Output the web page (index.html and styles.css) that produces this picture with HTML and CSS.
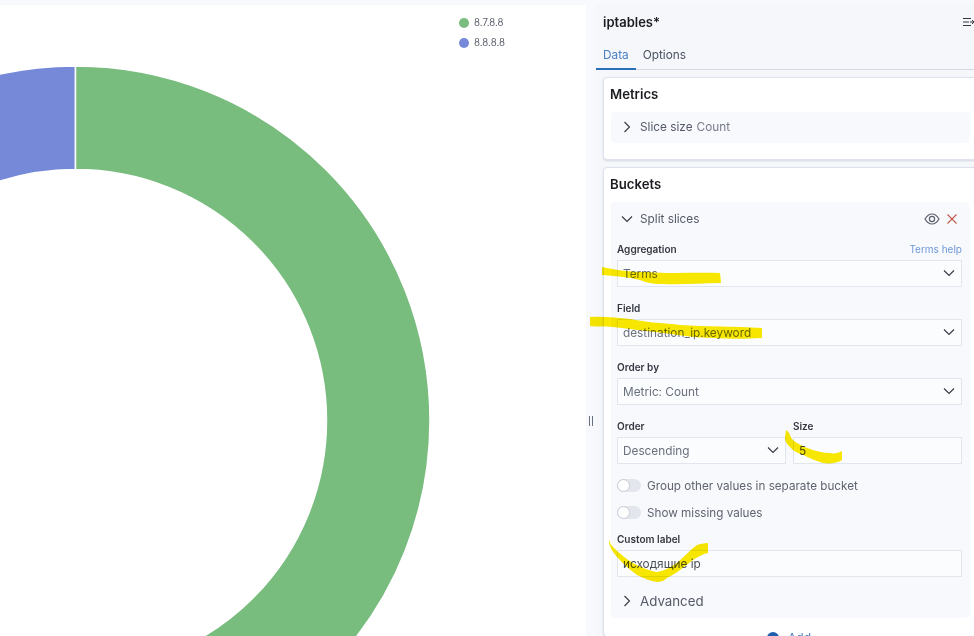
FILE: index.html
```html
<!DOCTYPE html>
<html lang="ru">
<head>
<meta charset="utf-8">
<title>iptables</title>
<link rel="stylesheet" href="styles.css">
</head>
<body>
<div class="page">
  <main class="chart">
    <svg class="donut" width="586" height="631" viewBox="0 5 586 631">
      <path class="slice slice-blue" d="M75.500 66A354.500 354.500 0 0 0-279 420.500L-175.500 420.500A251 251 0 0 1 75.500 169.500Z"/>
      <path class="slice slice-green" d="M75.500 66A354.500 354.500 0 0 1 75.500 775L75.500 671.500A251 251 0 0 0 75.500 169.500Z"/>
    </svg>
    <ul class="legend">
      <li class="legend-item"><span class="dot dot-green"></span>8.7.8.8</li>
      <li class="legend-item"><span class="dot dot-blue"></span>8.8.8.8</li>
    </ul>
  </main>
  <div class="resizer"><span class="grip"></span></div>
  <aside class="side">
    <header class="side-head">
      <h1 class="title">iptables*</h1>
      <svg class="collapse" width="11" height="12" viewBox="0 0 11 12"><path d="M0 2.500h8M0 6h6M0 9.500h8M7 6h4M9 4l2 2-2 2"/></svg>
    </header>
    <nav class="tabs">
      <span class="tab tab-active">Data</span>
      <span class="tab">Options</span>
    </nav>
    <section class="card card-metrics">
      <h2 class="card-title">Metrics</h2>
      <div class="accordion acc-closed">
        <svg class="chev" width="12" height="12" viewBox="0 0 12 12"><path d="M3.500 1l5 5-5 5"/></svg>
        <span class="acc-name">Slice size</span> <span class="acc-sub">Count</span>
      </div>
    </section>
    <section class="card card-buckets">
      <h2 class="card-title">Buckets</h2>
      <div class="accordion">
        <div class="acc-head">
          <svg class="chev" width="12" height="12" viewBox="0 0 12 12"><path d="M1 3.500l5 5 5-5"/></svg>
          <span class="acc-name">Split slices</span>
          <svg class="eye" width="16" height="16" viewBox="0 0 16 16"><path d="M1 8c2-3.400 4.300-5 7-5s5 1.600 7 5c-2 3.400-4.300 5-7 5s-5-1.600-7-5z"/><circle cx="8" cy="8" r="2.600"/></svg>
          <svg class="cross" width="10" height="10" viewBox="0 0 10 10"><path d="M.5.5l9 9M9.500.5l-9 9"/></svg>
        </div>
        <div class="form">
          <div class="field">
            <div class="label-row"><label class="label">Aggregation</label><span class="help">Terms help</span></div>
            <div class="control">Terms<svg class="caret" width="12" height="12" viewBox="0 0 12 12"><path d="M1 3.500l5 5 5-5"/></svg></div>
          </div>
          <div class="field">
            <div class="label-row"><label class="label">Field</label></div>
            <div class="control">destination_ip.keyword<svg class="caret" width="12" height="12" viewBox="0 0 12 12"><path d="M1 3.500l5 5 5-5"/></svg></div>
          </div>
          <div class="field">
            <div class="label-row"><label class="label">Order by</label></div>
            <div class="control">Metric: Count<svg class="caret" width="12" height="12" viewBox="0 0 12 12"><path d="M1 3.500l5 5 5-5"/></svg></div>
          </div>
          <div class="field-pair">
            <div class="field">
              <div class="label-row"><label class="label">Order</label></div>
              <div class="control">Descending<svg class="caret" width="12" height="12" viewBox="0 0 12 12"><path d="M1 3.500l5 5 5-5"/></svg></div>
            </div>
            <div class="field">
              <div class="label-row"><label class="label">Size</label></div>
              <div class="control control-dark">5</div>
            </div>
          </div>
          <div class="switch-row"><span class="switch"><span class="knob"></span></span>Group other values in separate bucket</div>
          <div class="switch-row"><span class="switch"><span class="knob"></span></span>Show missing values</div>
          <div class="field field-custom">
            <div class="label-row"><label class="label">Custom label</label></div>
            <div class="control control-dark">исходящие ip</div>
          </div>
          <div class="advanced">
            <svg class="chev" width="12" height="12" viewBox="0 0 12 12"><path d="M3.500 1l5 5-5 5"/></svg>
            Advanced
          </div>
        </div>
      </div>
      <div class="add"><span class="add-icon">+</span>Add</div>
    </section>
  </aside>
  <svg class="marks" width="974" height="636" viewBox="0 0 974 636">
    <path d="M602 267C615 270 632 272 647 272C672 274 696 272 720 273L721 283C700 283 682 285 663 284C650 284 645 282 640 280C627 277 615 276 602 275Z"/>
    <path d="M590 317C603 316 618 318 630 319C650 323 665 323 680 325C705 327 735 326 762 328L762 338C745 339 730 339 713 338C695 338 680 335 663 333C645 331 630 329 613 327C605 326 597 327 590 326Z"/>
    <path d="M786 430C788 431 788 432 789 433C791 438 793 441 797 443C802 446 807 448 813 450C820 452 824 453 830 453C835 454 838 453 842 451L842 460C838 463 830 464 823 463C816 461 810 458 803 455C798 453 793 451 790 447C786 443 785 441 785 437Z"/>
    <path d="M609 540C610 543 611 545 613 547C619 553 626 559 633 563C640 567 650 571 657 572C664 571 671 567 677 563C684 557 690 550 697 545C700 544 704 543 708 543L708 553C703 554 698 557 693 560C685 566 676 574 667 578C664 581 660 582 657 582C650 581 643 578 637 575C630 570 623 564 617 557C613 552 610 548 609 543Z"/>
  </svg>
</div>
</body>
</html>
```
FILE: styles.css
```css
* { box-sizing: border-box; }
html, body { margin: 0; height: 100%; }
body { background: #f8f9fc; font-family: Inter, "Noto Sans", sans-serif; color: #343741; overflow: hidden; }
.page { position: relative; width: 974px; height: 636px; overflow: hidden; display: flex; padding-top: 5px; }
.chart { position: relative; width: 586px; flex: none; height: 631px; background: #fff; overflow: hidden; }
.donut { display: block; }
.slice { stroke: #fff; stroke-width: 1.500; }
.slice-blue { fill: #7689d8; }
.slice-green { fill: #78bc7e; }
.legend { position: absolute; left: 459px; top: 10px; margin: 0; padding: 0; list-style: none; display: flex; flex-direction: column; gap: 4px; }
.legend-item { display: flex; align-items: center; gap: 5px; font-size: 9.700px; line-height: 16px; color: #5a5f6b; }
.dot { width: 10px; height: 10px; border-radius: 50%; }
.dot-green { background: #78bc7e; }
.dot-blue { background: #7689d8; }
.resizer { width: 10px; flex: none; display: flex; align-items: flex-start; justify-content: center; padding-top: 411px; }
.grip { width: 4px; height: 10px; border-left: 1px solid #69707d; border-right: 1px solid #69707d; }
.side { width: 378px; flex: none; background: #f5f7fb; height: 631px; overflow: hidden; }
.side-head { height: 34px; padding: 9px 0 0 7px; display: flex; justify-content: space-between; }
.title { margin: 0; font-size: 13px; line-height: 17px; font-weight: 600; color: #1a1c21; }
.collapse { margin-top: 2px; flex: none; fill: none; stroke: #343741; stroke-width: 1; }
.tabs { height: 31px; display: flex; border-bottom: 1px solid #d3dae6; font-size: 11.800px; line-height: 32px; }
.tab { padding: 0 7px; color: #4a5160; }
.tab-active { color: #4a7fc4; box-shadow: inset 0 -2px 0 #2a6db8; height: 31px; }
.card { margin: 7px 0 0 7px; width: 380px; background: #fff; border: 1px solid #dde2ec; border-radius: 4px; padding: 7px 7px 0; box-shadow: 0 1px 2px rgba(120, 130, 160, .25); }
.card-metrics { height: 83px; }
.card-buckets { height: 470px; }
.card-title { margin: 0 0 9px -1px; font-size: 13.200px; line-height: 18px; font-weight: 600; color: #1a1c21; }
.accordion { width: 358px; background: #f8f9fc; border-radius: 4px; color: #535966; font-size: 11.800px; }
.acc-closed { height: 31px; display: flex; align-items: center; padding: 0 0 1px 10px; }
.acc-closed .acc-name { margin-right: 4px; }
.chev { fill: none; stroke: #343741; stroke-width: 1.100; margin-right: 7px; }
.acc-head { height: 33px; display: flex; align-items: center; padding-left: 10px; }
.acc-name { color: #535966; }
.acc-sub { color: #757b87; }
.eye { margin-left: auto; fill: none; stroke: #5a606c; stroke-width: 1.200; }
.cross { margin: 0 12px 0 7px; fill: none; stroke: #bd5a4c; stroke-width: 1.100; }
.form { padding: 5px 7px 7px 6px; }
.field { margin-bottom: 12px; }
.label-row { display: flex; justify-content: space-between; height: 17px; align-items: center; margin-bottom: 3px; font-size: 10px; }
.label { font-weight: 600; color: #343741; }
.help { color: #6d98d4; }
.control { height: 27px; background: #fbfcfe; border: 1px solid #e1e5ee; padding: 1px 6px 0 5px; display: flex; align-items: center; justify-content: space-between; font-size: 11.800px; color: #69707d; }
.control-dark { color: #4a4f55; }
.caret { fill: none; stroke: #343741; stroke-width: 1.100; margin-top: -2px; }
.field-pair { display: grid; grid-template-columns: 169px 169px; gap: 7px; }
.field-pair .field { margin-bottom: 0; }
.switch-row { height: 27px; display: flex; align-items: center; gap: 6px; font-size: 11.700px; color: #5f6570; }
.field-pair + .switch-row { margin-top: 8px; }
.switch { width: 24px; height: 13px; border-radius: 7px; background: #e3e6ec; display: block; position: relative; }
.knob { position: absolute; left: 0; top: 0; width: 13px; height: 13px; border-radius: 50%; background: #fff; border: 1px solid #c8ccd6; }
.field-custom { margin-top: 4px; margin-bottom: 0; }
.advanced { margin-top: 14px; padding-left: 4px; display: flex; align-items: center; font-size: 13.300px; color: #535966; height: 20px; }
.advanced .chev { margin-right: 7px; }
.add { margin-top: 12px; display: flex; justify-content: center; align-items: center; gap: 9px; font-size: 12px; color: #4a7fc4; padding-right: 8px; }
.add-icon { width: 12px; height: 12px; border-radius: 50%; background: #1f5fae; color: #fff; font-size: 10px; line-height: 12px; text-align: center; }
.marks { position: absolute; left: 0; top: 0; pointer-events: none; fill: #fbe900; mix-blend-mode: multiply; }
```
